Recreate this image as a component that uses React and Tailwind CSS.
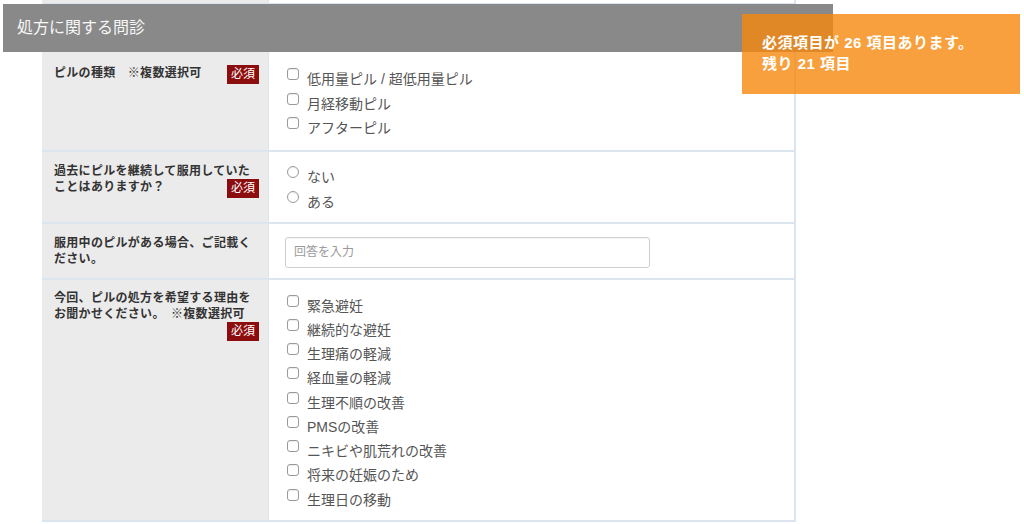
import React from 'react';

const FONT = "font-['Liberation_Sans','Noto_Sans_CJK_JP',sans-serif]";

const Badge = () => (
    <span className="float-right ml-1 bg-[#8c0d0d] text-white font-normal text-[12px] leading-[19px] px-[4px] h-[19px] tracking-normal">必須</span>
);

const Check = ({ label, radio }) => (
    <div className="flex items-start">
        <span
            className={`mt-[1px] ml-[2px] w-[12px] h-[12px] shrink-0 border border-[#9a9a9a] bg-white ${radio ? 'rounded-full' : 'rounded-[3px]'} shadow-[inset_0_1px_1px_rgba(0,0,0,0.08)]`}
        />
        <span className="ml-[8px]">{label}</span>
    </div>
);

function Row({ label, children, labelPt, rightCls }) {
    return (
        <div className="flex border-b-2 border-[#dbe4ef]">
            <div className={`w-[227px] shrink-0 bg-[#ebebeb] border-r border-[#dbe4ef] pl-[12px] pr-[9px] ${labelPt} text-[12px] leading-[16px] font-bold text-[#333] tracking-[0.3px] flow-root`}>
                {label}
            </div>
            <div className={`flex-1 pl-[16px] text-[14px] text-[#555] ${rightCls}`}>{children}</div>
        </div>
    );
}

export default function App() {
    const reasons = [
        '緊急避妊',
        '継続的な避妊',
        '生理痛の軽減',
        '経血量の軽減',
        '生理不順の改善',
        'PMSの改善',
        'ニキビや肌荒れの改善',
        '将来の妊娠のため',
        '生理日の移動',
    ];

    return (
        <div className={`relative min-h-[524px] bg-white overflow-hidden ${FONT}`}>
            <div className="ml-[42px] w-[754px] border-r-2 border-[#dbe4ef]">
                {/* tail of the previous row */}
                <div className="flex h-[4px] border-b border-[#dbe4ef]">
                    <div className="w-[227px] bg-[#ebebeb] border-r border-[#dbe4ef]" />
                    <div className="flex-1" />
                </div>

                {/* section header */}
                <div className="-ml-[39px] w-[830px] h-[48px] bg-[#898989] flex items-center pl-[14px] text-[16px] text-[#f7f7f7]">
                    処方に関する問診
                </div>

                <Row
                    labelPt="pt-[13px]"
                    rightCls="pt-[15px] pb-[9px] leading-[24.5px]"
                    label={<>ピルの種類　※複数選択可<Badge /></>}
                >
                    <Check label="低用量ピル / 超低用量ピル" />
                    <Check label="月経移動ピル" />
                    <Check label="アフターピル" />
                </Row>

                <Row
                    labelPt="pt-[11px]"
                    rightCls="pt-[13px] pb-[7px] leading-[25px]"
                    label={<>過去にピルを継続して服用していたことはありますか？<Badge /></>}
                >
                    <Check radio label="ない" />
                    <Check radio label="ある" />
                </Row>

                <Row
                    labelPt="pt-[11px]"
                    rightCls="pt-[13px] pb-[10px]"
                    label="服用中のピルがある場合、ご記載ください。"
                >
                    <input
                        placeholder="回答を入力"
                        className="block w-[365px] h-[31px] border border-[#cfcfcf] rounded-[3px] px-[8px] text-[12px] text-[#555] placeholder:text-[#9a9a9a] shadow-[inset_0_1px_1px_rgba(0,0,0,0.04)] outline-none"
                    />
                </Row>

                <Row
                    labelPt="pt-[10px]"
                    rightCls="pt-[14px] pb-[8px] leading-[24.25px]"
                    label={<>今回、ピルの処方を希望する理由をお聞かせください。　※複数選択可<Badge /></>}
                >
                    {reasons.map((r) => (
                        <Check key={r} label={r} />
                    ))}
                </Row>
            </div>

            {/* required-items notice */}
            <div className="absolute left-[742px] top-[14px] w-[278px] h-[80px] bg-[rgba(245,136,12,0.8)] pl-[20px] pt-[18px] text-white font-bold text-[15px] leading-[21px] tracking-[0.5px]">
                <p>必須項目が 26 項目あります。</p>
                <p>残り 21 項目</p>
            </div>
        </div>
    );
}
